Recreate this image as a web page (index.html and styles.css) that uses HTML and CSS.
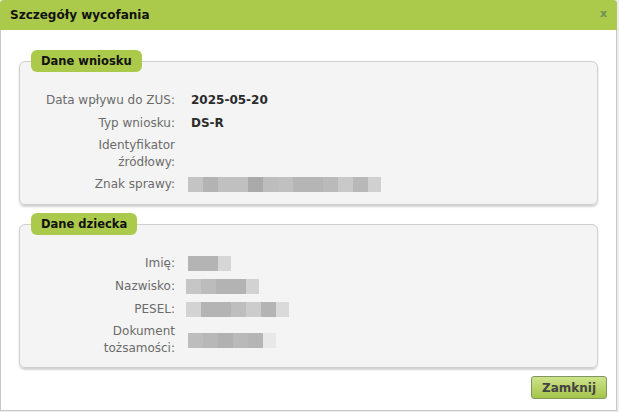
FILE: index.html
```html
<!DOCTYPE html>
<html lang="pl">
<head>
  <meta charset="UTF-8">
  <title>Szczegóły wycofania</title>
  <link rel="stylesheet" href="styles.css">
</head>
<body>
  <div class="dialog">
    <div class="dialog-title">
      <span>Szczegóły wycofania</span>
      <span class="close">x</span>
    </div>

    <div class="dialog-body">
      <fieldset class="group">
        <legend>Dane wniosku</legend>
        <div class="rows">
          <div class="lbl">Data wpływu do ZUS:</div>
          <div class="val">2025-05-20</div>

          <div class="lbl">Typ wniosku:</div>
          <div class="val">DS-R</div>

          <div class="lbl">Identyfikator<br>źródłowy:</div>
          <div class="val"></div>

          <div class="lbl">Znak sprawy:</div>
          <div class="val">
            <span class="blur" data-c="c4 b3 c0 c0 aa bd c0 b5 b5 ba c9 b8 d0"></span>
          </div>
        </div>
      </fieldset>

      <fieldset class="group">
        <legend>Dane dziecka</legend>
        <div class="rows">
          <div class="lbl">Imię:</div>
          <div class="val"><span class="blur" data-c="b4 b4 d6"></span></div>

          <div class="lbl">Nazwisko:</div>
          <div class="val"><span class="blur shift" data-c="c6 bc b3 b3 d2"></span></div>

          <div class="lbl">PESEL:</div>
          <div class="val"><span class="blur shift" data-c="d3 b4 b4 be cc b4 da"></span></div>

          <div class="lbl">Dokument<br>tożsamości:</div>
          <div class="val"><span class="blur" data-c="bd b8 b1 b9 b5 e8"></span></div>
        </div>
      </fieldset>

      <div class="actions">
        <button class="btn">Zamknij</button>
      </div>
    </div>
  </div>

  <script>
    // rozmyte (zanonimizowane) pola - kafelki 15px
    document.querySelectorAll(".blur").forEach(function (el) {
      el.dataset.c.split(" ").forEach(function (c) {
        const k = document.createElement("i");
        k.style.background = "#" + c + c.slice(0, 2) + c.slice(0, 2);
        el.appendChild(k);
      });
    });
  </script>
</body>
</html>
```

FILE: styles.css
```css
body {
  margin: 0;
  background: #ececec;
  font-family: "DejaVu Sans", Verdana, sans-serif;
  font-size: 12px;
  color: #333;
}

.dialog {
  width: 617px;
  height: 411px;
  box-sizing: border-box;
  background: #fff;
  border: 1px solid #c8c8c8;
  border-top: none;
  border-radius: 4px 4px 0 0;
  display: flex;
  flex-direction: column;
}

.dialog-title {
  height: 30px;
  background: #abc94a;
  border-radius: 4px 4px 0 0;
  margin: 0 -1px;
  padding: 0 10px 0 10px;
  display: flex;
  align-items: center;
  justify-content: space-between;
  font-weight: bold;
  font-size: 12px;
  color: #111;
}

.close {
  color: #6f8f5a;
  font-size: 11px;
  margin-top: -4px;
}

.dialog-body {
  padding: 20px 18px 0 18px;
}

.group {
  margin: 0 0 8px;
  padding: 19px 0 10px;
  background: #f4f4f4;
  border: 1px solid #cfcfcf;
  border-radius: 6px;
  box-shadow: 0 2px 2px rgba(0, 0, 0, 0.18);
}

.group legend {
  margin-left: 11px;
  padding: 0 10px;
  height: 22px;
  line-height: 22px;
  background: #abc94a;
  border-radius: 6px;
  font-weight: bold;
  font-size: 11.5px;
  color: #111;
}

.rows {
  display: grid;
  grid-template-columns: 155px 1fr;
  grid-auto-rows: minmax(19px, auto);
  column-gap: 16px;
  row-gap: 4px;
  line-height: 17px;
}

.lbl {
  text-align: right;
  color: #6b6b6b;
  align-self: center;
}

.val {
  font-weight: bold;
  font-size: 12px;
  line-height: 19px;
  color: #2b2b2b;
  display: flex;
  align-items: center;
}

.blur {
  display: flex;
  height: 15px;
  margin-left: -3px;
}

.blur.shift {
  margin-left: -5px;
}

.blur i {
  width: 15px;
  height: 15px;
}

.blur i:last-child {
  width: 13px;
}

.actions {
  display: flex;
  justify-content: flex-end;
  margin: 2px -9px 0 0;
}

.btn {
  font-family: inherit;
  font-size: 12px;
  font-weight: bold;
  color: #444;
  height: 23px;
  padding: 0 10px;
  border: 1px solid #7f9660;
  border-radius: 3px;
  background: linear-gradient(#cde38a, #a6c44a);
}
```
